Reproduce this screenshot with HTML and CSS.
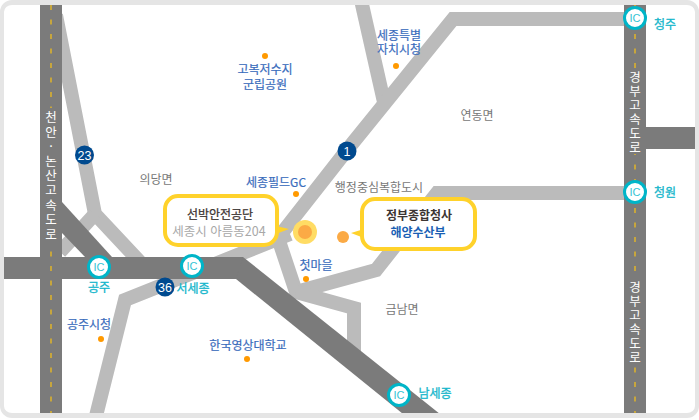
FILE: index.html
```html
<!DOCTYPE html>
<html lang="ko">

<head>
    <meta charset="UTF-8">
    <title>오시는 길</title>
    <link rel="stylesheet" href="styles.css">
</head>

<body>
    <div class="map-frame">
        <svg class="map" width="691" height="408" viewBox="4 5 691 408" xmlns="http://www.w3.org/2000/svg">
            <!-- local roads -->
            <g class="road-light">
                <polyline points="56,15 95,214 140,262" />
                <polyline points="95,214 60,252" />
                <polyline points="361,0 384,102" />
                <polyline points="95,420 125,300 290,234" />
                <polyline points="624,19 453,19 347,150 278,238 296,292 376,270 437,193 624,193" />
                <polyline points="296,292 354,308 354,355" />
            </g>

            <!-- expressways -->
            <g class="road-dark">
                <rect x="40" y="0" width="22" height="420" />
                <rect x="624" y="0" width="22" height="420" />
                <rect x="646" y="127" width="60" height="22" />
                <rect x="0" y="257" width="243" height="22" />
                <polygon points="62,202 112,257 85,257 62,233" />
                <polygon points="243,257 445,418 408,418 236,279" />
            </g>

            <g class="lane-dash">
                <line x1="51" y1="5" x2="51" y2="420" />
                <line x1="635" y1="5" x2="635" y2="420" />
            </g>

            <!-- highway names -->
            <rect class="road-name-bg" x="42" y="108" width="18" height="135" />
            <rect class="road-name-bg" x="626" y="68" width="18" height="86" />
            <rect class="road-name-bg" x="626" y="279" width="18" height="87" />
            <text class="road-name wide" x="51" y="111">천안·논산고속도로</text>
            <text class="road-name" x="635" y="71">경부고속도로</text>
            <text class="road-name" x="635" y="281">경부고속도로</text>

            <!-- route numbers -->
            <g class="route">
                <circle cx="84.500" cy="155" r="9.500" />
                <circle cx="347" cy="151" r="9.500" />
                <circle cx="165" cy="287" r="9.500" />
            </g>
            <g class="route-num">
                <text x="84.500" y="159.500">23</text>
                <text x="347" y="155.500">1</text>
                <text x="165" y="291.500">36</text>
            </g>

            <!-- interchanges -->
            <g class="ic">
                <circle cx="635" cy="18" r="10.500" />
                <circle cx="635" cy="192" r="10.500" />
                <circle cx="99" cy="267" r="10.500" />
                <circle cx="192" cy="266" r="10.500" />
                <circle cx="399" cy="395" r="10.500" />
            </g>
            <g class="ic-text">
                <text x="635" y="22">IC</text>
                <text x="635" y="196">IC</text>
                <text x="99" y="271">IC</text>
                <text x="192" y="270">IC</text>
                <text x="399" y="399">IC</text>
            </g>

            <!-- landmarks -->
            <g class="spot">
                <circle cx="265" cy="56" r="3" />
                <circle cx="396" cy="66" r="3" />
                <circle cx="296" cy="194" r="3" />
                <circle cx="306" cy="279" r="3" />
                <circle cx="101" cy="339" r="3" />
                <circle cx="247" cy="359" r="3" />
            </g>

            <g class="label-blue">
                <text><tspan x="265" y="74">고복저수지</tspan><tspan x="265" y="89">군립공원</tspan></text>
                <text><tspan x="399" y="40">세종특별</tspan><tspan x="399" y="54">자치시청</tspan></text>
                <text x="276" y="187">세종필드GC</text>
                <text x="316" y="270">첫마을</text>
                <text x="89" y="329">공주시청</text>
                <text x="248" y="350">한국영상대학교</text>
            </g>
            <g class="label-gray">
                <text x="477" y="120">연동면</text>
                <text x="156" y="184">의당면</text>
                <text x="379" y="192">행정중심복합도시</text>
                <text x="402" y="314">금남면</text>
            </g>
            <g class="label-cyan">
                <text x="665" y="29">청주</text>
                <text x="665" y="197">청원</text>
                <text x="99" y="292">공주</text>
                <text x="193" y="293">서세종</text>
                <text x="435" y="398">남세종</text>
            </g>

            <!-- current location -->
            <circle class="here-halo" cx="305" cy="232" r="12" />
            <circle class="here-dot" cx="305" cy="232" r="7" />
            <circle class="here-dot" cx="343" cy="237" r="6" />

            <!-- callouts -->
            <polygon class="tail" points="276,226 289,229 276,234" />
            <rect class="bubble" x="165" y="196" width="112" height="49" rx="13" />
            <text class="bubble-title" x="220" y="219">선박안전공단</text>
            <text class="bubble-sub" x="219" y="236">세종시 아름동204</text>

            <polygon class="tail" points="364,229 351,233 364,238" />
            <rect class="bubble" x="362" y="199" width="113" height="50" rx="13" />
            <text class="bubble-title strong" x="419" y="220">정부종합청사</text>
            <text class="bubble-dept" x="418" y="237">해양수산부</text>
        </svg>
    </div>
</body>

</html>
```

FILE: styles.css
```css
body {
    margin: 0;
    background-color: white;
}

.map-frame {
    width: 691px;
    height: 408px;
    border: solid #e5e5e5;
    border-width: 5px 4px;
    border-radius: 12px;
    overflow: hidden;
    background-color: white;
}

.map {
    display: block;
    font-family: "Noto Sans CJK KR", "Noto Sans", sans-serif;
    font-size: 12px;
    text-anchor: middle;
}

.road-light polyline {
    fill: none;
    stroke: #bbbbbb;
    stroke-width: 14;
    stroke-linejoin: miter;
}

.road-dark {
    fill: #7b7b7b;
}

.lane-dash line {
    stroke: #e0b428;
    stroke-width: 1.5;
    stroke-dasharray: 5 9.500;
}

.road-name-bg {
    fill: #7b7b7b;
}

.road-name {
    fill: white;
    font-size: 12.500px;
    letter-spacing: 1.600px;
    text-anchor: start;
    writing-mode: vertical-rl;
    text-orientation: upright;
}

.road-name.wide {
    letter-spacing: 2.100px;
}

.route {
    fill: #004a8f;
}

.route-num text {
    fill: white;
    font-family: "Liberation Sans", sans-serif;
    font-size: 12.500px;
}

.ic circle {
    fill: white;
    stroke: #00b5c8;
    stroke-width: 3;
}

.ic-text text {
    fill: #35c4d4;
    font-family: "Liberation Sans", sans-serif;
    font-size: 11px;
}

.spot {
    fill: #ff9900;
}

.label-blue {
    fill: #3a6cbc;
    stroke: #3a6cbc;
    stroke-width: 0.200;
}

.label-gray {
    fill: #777777;
}

.label-cyan {
    fill: #14b6cb;
    stroke: #14b6cb;
    stroke-width: 0.300;
}

.here-halo {
    fill: #ffdc64;
}

.here-dot {
    fill: #fbaa45;
}

.bubble {
    fill: white;
    stroke: #ffd22b;
    stroke-width: 4;
}

.tail {
    fill: #ffd22b;
}

.bubble-title {
    fill: #3c3532;
    stroke: #3c3532;
    stroke-width: 0.250;
}

.bubble-title.strong {
    font-weight: 700;
    stroke: none;
}

.bubble-sub {
    fill: #a8a8a8;
    font-size: 12.500px;
}

.bubble-dept {
    fill: #1a5fb4;
    font-weight: 700;
}
```
